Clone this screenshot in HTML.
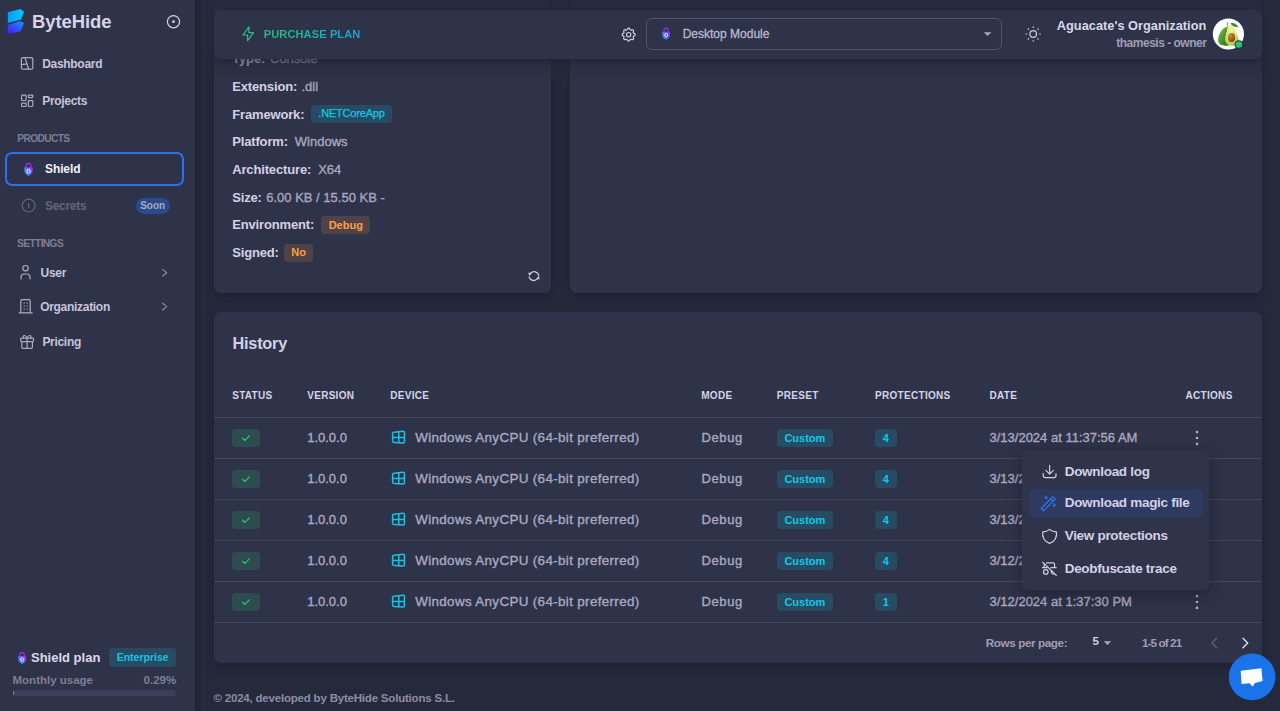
<!DOCTYPE html>
<html><head><meta charset="utf-8"><title>ByteHide Shield</title>
<style>
html,body{margin:0;padding:0;}
body{width:1280px;height:711px;overflow:hidden;position:relative;background:#25293c;font-family:"Liberation Sans",sans-serif;}
.t{position:absolute;white-space:nowrap;}
.r{position:absolute;}
</style></head><body>
<div class="r" style="left:0px;top:0px;width:195.00px;height:711.00px;background:#2f3349;"></div>
<svg class="r" style="left:0;top:0" width="40" height="40" viewBox="0 0 40 40">
<defs><linearGradient id="lg1" x1="0" y1="0" x2="1" y2="0"><stop offset="0" stop-color="#0a9cf6"/><stop offset="1" stop-color="#00c6ff"/></linearGradient>
<linearGradient id="lg2" x1="0" y1="1" x2="1" y2="0"><stop offset="0" stop-color="#4a14ff"/><stop offset="1" stop-color="#1496ff"/></linearGradient></defs>
<polygon points="7.8,12.3 20.6,9.1 24,11.8 21.1,19.6 7.8,22.9" fill="url(#lg1)"/>
<polygon points="7.8,24.9 19.7,21.1 24,22.9 20.6,31.2 8,34.1" fill="url(#lg2)"/>
</svg>
<div class="t" style="left:32px;top:13.34px;font-size:18.5px;line-height:18.5px;font-weight:700;color:#d6d4e8;letter-spacing:-0.1px;">ByteHide</div>
<svg class="r" style="left:160px;top:8px" width="28" height="28" viewBox="0 0 28 28"><circle cx="13.5" cy="13.7" r="6.1" fill="none" stroke="#cfcde4" stroke-width="1.3"/><circle cx="13.5" cy="13.7" r="1.4" fill="#cfcde4"/></svg>
<svg class="r" style="left:0;top:0" width="195" height="360" viewBox="0 0 195 360">
<g fill="none" stroke="#acaac2" stroke-width="1.2" stroke-linecap="round" stroke-linejoin="round">
<rect x="21.4" y="57.6" width="11.4" height="11.6" rx="1.5"/>
<path d="M24.9 57.6 L28.7 69.2 M21.4 64.6 L26.9 63.9"/>
<rect x="21.6" y="95.2" width="4.5" height="5.3" rx="0.8"/>
<rect x="28.3" y="95.2" width="4.5" height="2.4" rx="0.8"/>
<rect x="21.6" y="103.2" width="4.5" height="3.3" rx="0.8"/>
<rect x="28.3" y="100.7" width="4.5" height="5.8" rx="0.8"/>
</g>
<g fill="none" stroke="#acaac2" stroke-width="1.2" stroke-linecap="round" stroke-linejoin="round">
<circle cx="25.5" cy="268.2" r="2.7"/>
<path d="M21 279 V277.2 A3.2 3.2 0 0 1 24.2 274 H26.8 A3.2 3.2 0 0 1 30 277.2 V279"/>

<path d="M19.2 312.8 H32.2 M20.8 312.8 V300.8 A1.2 1.2 0 0 1 22 299.6 H29 A1.2 1.2 0 0 1 30.2 300.8 V312.8"/>
<path d="M24 303 h.5 M27 303 h.5 M24 306 h.5 M27 306 h.5 M24 309 h.5 M27 309 h.5" stroke-width="1.1"/>
<rect x="20.7" y="338.2" width="12.8" height="3.4" rx="0.8"/>
<path d="M21.8 341.6 V347.2 A1.2 1.2 0 0 0 23 348.4 H31.2 A1.2 1.2 0 0 0 32.4 347.2 V341.6 M27.1 338.2 V348.4"/>
<path d="M27.1 338.2 C25.5 334.2 22 335 23.6 338.2 M27.1 338.2 C28.7 334.2 32.2 335 30.6 338.2"/>
</g>
<g fill="none" stroke="#8e8ca4" stroke-width="1.1" stroke-linecap="round" stroke-linejoin="round"><path d="M162.6 269.4 L166.8 272.7 L162.6 276"/><path d="M162.6 303.2 L166.8 306.6 L162.6 310"/></g>
<g fill="none" stroke="#62647c" stroke-width="1.2">
<circle cx="28.6" cy="205.6" r="6.4"/>
<path d="M28.6 203.9 V207.3" stroke-linecap="round"/>
</g>
</svg>
<div class="t" style="left:42.2px;top:58.24px;font-size:12px;line-height:12px;font-weight:700;color:#c6c4da;letter-spacing:-0.3px;">Dashboard</div>
<div class="t" style="left:42.2px;top:95.34px;font-size:12px;line-height:12px;font-weight:700;color:#c6c4da;letter-spacing:-0.3px;">Projects</div>
<div class="t" style="left:17.2px;top:134.17px;font-size:10.2px;line-height:10.2px;font-weight:700;color:#7f7d96;letter-spacing:-0.6px;">PRODUCTS</div>
<div class="r" style="left:5px;top:152px;width:179.00px;height:33.50px;box-sizing:border-box;border:2px solid #2d6ff0;border-radius:7px;"></div>
<svg class="r" style="left:24.2px;top:161.7px" width="9" height="14" viewBox="0 0 9 14">
<defs><linearGradient id="lk1" x1="0" y1="0.85" x2="1" y2="0.15"><stop offset="0" stop-color="#149eff"/><stop offset="0.45" stop-color="#4f74ff"/><stop offset="1" stop-color="#b61cff"/></linearGradient></defs>
<path d="M2.2 5.2 V3.6 A2.3 2.3 0 0 1 6.8 3.6 V5.2" fill="none" stroke="#9a2ff0" stroke-width="1.3"/>
<path d="M0.3 5.2 H8.7 V8.8 C8.7 11.2 6.8 12.9 4.5 13.9 C2.2 12.9 0.3 11.2 0.3 8.8 Z" fill="url(#lk1)"/>
<path d="M4.1 6.8 L2.8 9 L4.1 11.2 M5 6.8 L6.3 9 L5 11.2" fill="none" stroke="#e8e6ff" stroke-width="1.1"/>
</svg>
<div class="t" style="left:45px;top:163.24px;font-size:12px;line-height:12px;font-weight:700;color:#f2f1fa;letter-spacing:-0.1px;">Shield</div>
<div class="t" style="left:45px;top:200.44px;font-size:12px;line-height:12px;font-weight:700;color:#64667e;letter-spacing:-0.3px;">Secrets</div>
<div class="r" style="left:135.6px;top:198px;width:34.30px;height:15.80px;background:#2a4a8c;border-radius:8px;"></div>
<div class="t" style="left:152.7px;top:201.34px;font-size:10px;line-height:10px;font-weight:700;color:#a3a9c6;letter-spacing:0px;transform:translateX(-50%);">Soon</div>
<div class="t" style="left:17px;top:239.27px;font-size:10.2px;line-height:10.2px;font-weight:700;color:#7f7d96;letter-spacing:-0.6px;">SETTINGS</div>
<div class="t" style="left:40.6px;top:267.04px;font-size:12px;line-height:12px;font-weight:700;color:#c6c4da;letter-spacing:-0.3px;">User</div>
<div class="t" style="left:40.2px;top:300.84px;font-size:12px;line-height:12px;font-weight:700;color:#c6c4da;letter-spacing:-0.3px;">Organization</div>
<div class="t" style="left:42.4px;top:336.34px;font-size:12px;line-height:12px;font-weight:700;color:#c6c4da;letter-spacing:-0.3px;">Pricing</div>
<svg class="r" style="left:17.7px;top:650.5px" width="8.3" height="13.3" viewBox="0 0 9 14">
<defs><linearGradient id="lk2" x1="0" y1="0.85" x2="1" y2="0.15"><stop offset="0" stop-color="#149eff"/><stop offset="0.45" stop-color="#4f74ff"/><stop offset="1" stop-color="#b61cff"/></linearGradient></defs>
<path d="M2.2 5.2 V3.6 A2.3 2.3 0 0 1 6.8 3.6 V5.2" fill="none" stroke="#9a2ff0" stroke-width="1.3"/>
<path d="M0.3 5.2 H8.7 V8.8 C8.7 11.2 6.8 12.9 4.5 13.9 C2.2 12.9 0.3 11.2 0.3 8.8 Z" fill="url(#lk2)"/>
<path d="M4.1 6.8 L2.8 9 L4.1 11.2 M5 6.8 L6.3 9 L5 11.2" fill="none" stroke="#e8e6ff" stroke-width="1.1"/>
</svg>
<div class="t" style="left:31px;top:651.10px;font-size:13px;line-height:13px;font-weight:700;color:#dcdaee;letter-spacing:0px;">Shield plan</div>
<div class="r" style="left:109.1px;top:648.4px;width:67.10px;height:18.35px;background:#264b62;border-radius:4px;"></div>
<div class="t" style="left:142.6px;top:652.11px;font-size:10.5px;line-height:10.5px;font-weight:700;color:#17c4e0;letter-spacing:0px;transform:translateX(-50%);">Enterprise</div>
<div class="t" style="left:12.5px;top:674.77px;font-size:11.5px;line-height:11.5px;font-weight:700;color:#7f7d96;letter-spacing:0px;">Monthly usage</div>
<div class="t" style="right:1103.8px;top:674.77px;font-size:11.5px;line-height:11.5px;font-weight:700;color:#7f7d96;letter-spacing:0px;">0.29%</div>
<div class="r" style="left:12.5px;top:689.6px;width:163.70px;height:6.40px;background:#3d405d;border-radius:3px;overflow:hidden;"><div style="width:1.2px;height:100%;background:#28c76f"></div></div>
<div class="r" style="left:214px;top:-20px;width:337.40px;height:312.90px;background:#2f3349;border-radius:7px;box-shadow:0 3px 10px 1px rgba(15,20,34,0.32);"></div>
<div class="r" style="left:569.7px;top:-20px;width:692.30px;height:312.90px;background:#2f3349;border-radius:7px;box-shadow:0 3px 10px 1px rgba(15,20,34,0.32);"></div>
<div class="t" style="left:232.2px;top:51.80px;font-size:13px;line-height:13px;font-weight:700;color:#d3d1e6;letter-spacing:-0.15px;">Type:</div>
<div class="t" style="left:232.2px;top:79.60px;font-size:13px;line-height:13px;font-weight:700;color:#d3d1e6;letter-spacing:-0.15px;">Extension:</div>
<div class="t" style="left:232.2px;top:107.60px;font-size:13px;line-height:13px;font-weight:700;color:#d3d1e6;letter-spacing:-0.15px;">Framework:</div>
<div class="t" style="left:232.2px;top:135.30px;font-size:13px;line-height:13px;font-weight:700;color:#d3d1e6;letter-spacing:-0.15px;">Platform:</div>
<div class="t" style="left:232.2px;top:162.80px;font-size:13px;line-height:13px;font-weight:700;color:#d3d1e6;letter-spacing:-0.15px;">Architecture:</div>
<div class="t" style="left:232.2px;top:190.50px;font-size:13px;line-height:13px;font-weight:700;color:#d3d1e6;letter-spacing:-0.15px;">Size:</div>
<div class="t" style="left:232.2px;top:218.30px;font-size:13px;line-height:13px;font-weight:700;color:#d3d1e6;letter-spacing:-0.15px;">Environment:</div>
<div class="t" style="left:232.2px;top:246.00px;font-size:13px;line-height:13px;font-weight:700;color:#d3d1e6;letter-spacing:-0.15px;">Signed:</div>
<div class="t" style="left:270px;top:51.80px;font-size:13px;line-height:13px;font-weight:400;color:#a9a7bf;letter-spacing:0px;-webkit-text-stroke:0.35px currentColor;">Console</div>
<div class="t" style="left:301.5px;top:79.60px;font-size:13px;line-height:13px;font-weight:400;color:#a9a7bf;letter-spacing:0px;-webkit-text-stroke:0.35px currentColor;">.dll</div>
<div class="t" style="left:294.8px;top:135.30px;font-size:13px;line-height:13px;font-weight:400;color:#a9a7bf;letter-spacing:0px;-webkit-text-stroke:0.35px currentColor;">Windows</div>
<div class="t" style="left:318.2px;top:162.80px;font-size:13px;line-height:13px;font-weight:400;color:#a9a7bf;letter-spacing:0px;-webkit-text-stroke:0.35px currentColor;">X64</div>
<div class="t" style="left:266.25px;top:190.50px;font-size:13px;line-height:13px;font-weight:400;color:#a9a7bf;letter-spacing:0px;-webkit-text-stroke:0.35px currentColor;">6.00 KB / 15.50 KB -</div>
<div class="r" style="left:311px;top:104.6px;width:81.00px;height:18.20px;background:#264b62;border-radius:4px;"></div>
<div class="t" style="left:351.5px;top:107.89px;font-size:11px;line-height:11px;font-weight:400;color:#10c8e6;letter-spacing:-0.2px;transform:translateX(-50%);-webkit-text-stroke:0.25px currentColor;">.NETCoreApp</div>
<div class="r" style="left:321.25px;top:216px;width:49.05px;height:18.00px;background:#4f4348;border-radius:4px;"></div>
<div class="t" style="left:345.8px;top:219.69px;font-size:11px;line-height:11px;font-weight:700;color:#ff9f43;letter-spacing:0px;transform:translateX(-50%);">Debug</div>
<div class="r" style="left:284.4px;top:243.75px;width:28.60px;height:17.85px;background:#4f4348;border-radius:4px;"></div>
<div class="t" style="left:298.7px;top:247.39px;font-size:11px;line-height:11px;font-weight:700;color:#ff9f43;letter-spacing:0px;transform:translateX(-50%);">No</div>
<svg class="r" style="left:526px;top:268px" width="16" height="16" viewBox="0 0 16 16"><g fill="none" stroke="#cfcde4" stroke-width="1.3" stroke-linecap="round" stroke-linejoin="round">
<path d="M4.6 5.2 A4.9 4.9 0 0 1 12.9 7.6"/><path d="M3.1 9 A4.9 4.9 0 0 0 11.4 10.9"/></g><g fill="#cfcde4"><path d="M2.2 4.5 L5.7 5.4 L3.3 7.9 Z"/><path d="M13.8 11.5 L10.3 10.6 L12.7 8.1 Z"/></g></svg>
<div class="r" style="left:195px;top:0px;width:1085.00px;height:86.00px;background:linear-gradient(180deg, rgba(37,41,60,0.82) 0%, rgba(37,41,60,0.92) 44%, rgba(37,41,60,0.45) 73%, rgba(37,41,60,0));"></div>
<div class="r" style="left:214px;top:9.5px;width:1047.50px;height:49.20px;background:#2f3349;border-radius:7px;box-shadow:0 4px 8px -4px rgba(19,17,32,0.42);"></div>
<svg class="r" style="left:238px;top:22px" width="22" height="24" viewBox="0 0 22 24"><path d="M10.9 4.9 V10.6 H15.6 L9.6 18.7 V13 H4.9 Z" fill="none" stroke="#25c283" stroke-width="1.2" stroke-linejoin="round"/></svg>
<div class="t" style="left:263.75px;top:28.54px;font-size:11px;line-height:11px;font-weight:700;color:#28c76f;letter-spacing:0.15px;background:linear-gradient(90deg,#22bd82 0%,#17b3ae 55%,#1ba2da 100%);-webkit-background-clip:text;background-clip:text;-webkit-text-fill-color:transparent;">PURCHASE PLAN</div>
<svg class="r" style="left:619.8px;top:25.6px" width="17.3" height="17.3" viewBox="0 0 24 24"><g fill="none" stroke="#cfcde4" stroke-width="1.65" stroke-linecap="round" stroke-linejoin="round">
<path d="M10.325 4.317c.426 -1.756 2.924 -1.756 3.35 0a1.724 1.724 0 0 0 2.573 1.066c1.543 -.94 3.31 .826 2.37 2.37a1.724 1.724 0 0 0 1.065 2.572c1.756 .426 1.756 2.924 0 3.35a1.724 1.724 0 0 0 -1.066 2.573c.94 1.543 -.826 3.31 -2.37 2.37a1.724 1.724 0 0 0 -2.572 1.065c-.426 1.756 -2.924 1.756 -3.35 0a1.724 1.724 0 0 0 -2.573 -1.066c-1.543 .94 -3.31 -.826 -2.37 -2.37a1.724 1.724 0 0 0 -1.065 -2.572c-1.756 -.426 -1.756 -2.924 0 -3.35a1.724 1.724 0 0 0 1.066 -2.573c-.94 -1.543 .826 -3.31 2.37 -2.37c1 .608 2.296 .07 2.572 -1.065z"/>
<circle cx="12" cy="12" r="3"/></g></svg>
<div class="r" style="left:646px;top:18px;width:356.00px;height:32.00px;box-sizing:border-box;border:1px solid rgba(225,222,245,0.2);border-radius:6px;"></div>
<svg class="r" style="left:662.3px;top:27.4px" width="8.2" height="12.6" viewBox="0 0 9 14">
<defs><linearGradient id="lk3" x1="0" y1="0.85" x2="1" y2="0.15"><stop offset="0" stop-color="#149eff"/><stop offset="0.45" stop-color="#4f74ff"/><stop offset="1" stop-color="#b61cff"/></linearGradient></defs>
<path d="M2.2 5.2 V3.6 A2.3 2.3 0 0 1 6.8 3.6 V5.2" fill="none" stroke="#9a2ff0" stroke-width="1.3"/>
<path d="M0.3 5.2 H8.7 V8.8 C8.7 11.2 6.8 12.9 4.5 13.9 C2.2 12.9 0.3 11.2 0.3 8.8 Z" fill="url(#lk3)"/>
<path d="M4.1 6.8 L2.8 9 L4.1 11.2 M5 6.8 L6.3 9 L5 11.2" fill="none" stroke="#e8e6ff" stroke-width="1.1"/>
</svg>
<div class="t" style="left:682.7px;top:27.84px;font-size:12px;line-height:12px;font-weight:400;color:#b9b7ce;letter-spacing:0px;-webkit-text-stroke:0.3px currentColor;">Desktop Module</div>
<svg class="r" style="left:980px;top:28px" width="16" height="12" viewBox="0 0 16 12"><path d="M3.7 4.3 H11.5 L7.6 8 Z" fill="#a9a7bf"/></svg>
<svg class="r" style="left:1022px;top:23px" width="22" height="22" viewBox="0 0 22 22"><g fill="none" stroke="#cfcde4" stroke-width="1.2" stroke-linecap="round">
<circle cx="11.2" cy="11" r="3.3"/>
<path d="M11.2 3.9 v.6 M11.2 17.5 v.6 M4.1 11 h.6 M17.7 11 h.6 M6.2 6 l.4 .4 M15.8 15.6 l.4 .4 M6.2 16 l.4 -.4 M15.8 6.4 l.4 -.4"/></g></svg>
<div class="t" style="right:73.70000000000005px;top:19.76px;font-size:12.8px;line-height:12.8px;font-weight:700;color:#dad8ec;letter-spacing:0px;">Aguacate's Organization</div>
<div class="t" style="right:73.70000000000005px;top:36.84px;font-size:12px;line-height:12px;font-weight:700;color:#9f9db6;letter-spacing:-0.5px;">thamesis - owner</div>
<svg class="r" style="left:1210px;top:16px" width="38" height="38" viewBox="0 0 38 38">
<defs><linearGradient id="avb" x1="0" y1="0" x2="1" y2="1"><stop offset="0" stop-color="#7fc25a"/><stop offset="1" stop-color="#1f6a12"/></linearGradient>
<radialGradient id="avf" cx="0.45" cy="0.25" r="0.8"><stop offset="0" stop-color="#f5f78c"/><stop offset="0.6" stop-color="#d3e065"/><stop offset="1" stop-color="#9cc23c"/></radialGradient>
<radialGradient id="avp" cx="0.35" cy="0.3" r="0.75"><stop offset="0" stop-color="#d08a4a"/><stop offset="1" stop-color="#7a4216"/></radialGradient></defs>
<circle cx="18.4" cy="18" r="15.6" fill="#ffffff"/>
<path d="M17.4 6.4 L17.6 9.6" stroke="#6aa84a" stroke-width="1.2"/>
<path d="M20.3 7.6 C23 6.3 26.5 7.6 28.4 11.4 C25.3 11.4 22.3 10.2 20.3 7.6 Z" fill="#3f8a2a"/>
<path d="M18 10.6 C14.2 11 10.8 14.8 9 19.2 C7.6 22.8 7.7 26.6 10.3 28.6 C12.4 30 15.6 29.9 19.2 29.4 C16.5 28 15.4 26 15.4 23.5 C15.4 20 16.5 17.5 17.2 14.5 Z" fill="url(#avb)"/>
<path d="M19.8 9 C22.8 9 24.4 12.8 25.9 16.3 C27.9 19.8 28.8 22 28.6 24.5 C28.3 28 25.5 29.8 22 29.7 C18 29.6 15.4 27.5 15.4 23.5 C15.4 20 16.5 17.5 17.2 14.5 C17.8 11.5 18.4 9 19.8 9 Z" fill="url(#avf)"/>
<ellipse cx="21.6" cy="21.4" rx="3.5" ry="4.5" fill="url(#avp)"/>
<circle cx="28.9" cy="28.6" r="4.4" fill="#2f3349"/><circle cx="28.9" cy="28.6" r="3.2" fill="#28c76f"/>
</svg>
<div class="r" style="left:213.5px;top:312px;width:1048.50px;height:350.60px;background:#2f3349;border-radius:7px;box-shadow:0 3px 10px 1px rgba(15,20,34,0.32);"></div>
<div class="t" style="left:232.4px;top:335.00px;font-size:16.3px;line-height:16.3px;font-weight:700;color:#d3d1e4;letter-spacing:-0.2px;">History</div>
<div class="t" style="left:232.2px;top:390.84px;font-size:10px;line-height:10px;font-weight:700;color:#d6d4e8;letter-spacing:0.3px;">STATUS</div>
<div class="t" style="left:307.2px;top:390.84px;font-size:10px;line-height:10px;font-weight:700;color:#d6d4e8;letter-spacing:0.3px;">VERSION</div>
<div class="t" style="left:390.3px;top:390.84px;font-size:10px;line-height:10px;font-weight:700;color:#d6d4e8;letter-spacing:0.3px;">DEVICE</div>
<div class="t" style="left:701.2px;top:390.84px;font-size:10px;line-height:10px;font-weight:700;color:#d6d4e8;letter-spacing:0.3px;">MODE</div>
<div class="t" style="left:776.8px;top:390.84px;font-size:10px;line-height:10px;font-weight:700;color:#d6d4e8;letter-spacing:0.3px;">PRESET</div>
<div class="t" style="left:875px;top:390.84px;font-size:10px;line-height:10px;font-weight:700;color:#d6d4e8;letter-spacing:0.3px;">PROTECTIONS</div>
<div class="t" style="left:989.5px;top:390.84px;font-size:10px;line-height:10px;font-weight:700;color:#d6d4e8;letter-spacing:0.3px;">DATE</div>
<div class="t" style="right:47.40000000000009px;top:390.84px;font-size:10px;line-height:10px;font-weight:700;color:#d6d4e8;letter-spacing:0.3px;">ACTIONS</div>
<div class="r" style="left:213.5px;top:416.5px;width:1048.50px;height:1.00px;background:rgba(225,222,245,0.12);"></div>
<div class="r" style="left:213.5px;top:458px;width:1048.50px;height:1.00px;background:rgba(225,222,245,0.12);"></div>
<div class="r" style="left:232.2px;top:428.70000000000005px;width:27.80px;height:18.30px;background:#2e4b4f;border-radius:4px;"></div>
<svg class="r" style="left:239px;top:430.85px" width="14" height="14" viewBox="0 0 14 14"><path d="M3.6 7.3 L5.9 9.4 L10.3 4.9" fill="none" stroke="#28c76f" stroke-width="1.3" stroke-linecap="round" stroke-linejoin="round"/></svg>
<div class="t" style="left:307.2px;top:431.20px;font-size:13px;line-height:13px;font-weight:400;color:#aba9c1;letter-spacing:0px;-webkit-text-stroke:0.35px currentColor;">1.0.0.0</div>
<svg class="r" style="left:388px;top:427.85px" width="20" height="20" viewBox="0 0 20 20"><g fill="none" stroke="#1fc0e0" stroke-width="1.5" stroke-linejoin="round">
<path d="M4.6 5.7 Q4.6 4.4 5.9 4.3 L15.1 3.3 Q16.4 3.2 16.4 4.5 V13.8 Q16.4 15.1 15.1 15 L5.9 14.4 Q4.6 14.3 4.6 13 Z"/><path d="M4.6 9.6 H16.4 M10.8 3.8 V14.7"/></g></svg>
<div class="t" style="left:415.2px;top:430.86px;font-size:13.4px;line-height:13.4px;font-weight:400;color:#aba9c1;letter-spacing:0.35px;-webkit-text-stroke:0.35px currentColor;">Windows AnyCPU (64-bit preferred)</div>
<div class="t" style="left:701.5px;top:431.20px;font-size:13px;line-height:13px;font-weight:400;color:#aba9c1;letter-spacing:0.6px;-webkit-text-stroke:0.35px currentColor;">Debug</div>
<div class="r" style="left:777.1px;top:428.65000000000003px;width:55.60px;height:18.40px;background:#264b62;border-radius:4px;"></div>
<div class="t" style="left:804.9px;top:432.54px;font-size:11px;line-height:11px;font-weight:700;color:#10c8e6;letter-spacing:0px;transform:translateX(-50%);">Custom</div>
<div class="r" style="left:875px;top:428.65000000000003px;width:21.80px;height:18.40px;background:#264b62;border-radius:4px;"></div>
<div class="t" style="left:885.9px;top:432.54px;font-size:11px;line-height:11px;font-weight:700;color:#10c8e6;letter-spacing:0px;transform:translateX(-50%);">4</div>
<div class="t" style="left:989.5px;top:431.20px;font-size:13px;line-height:13px;font-weight:400;color:#aba9c1;letter-spacing:0px;-webkit-text-stroke:0.35px currentColor;">3/13/2024 at 11:37:56 AM</div>
<svg class="r" style="left:1190px;top:429.85px" width="14" height="16" viewBox="0 0 14 16"><g fill="#b0aec6"><circle cx="7" cy="2.1" r="1.3"/><circle cx="7" cy="8" r="1.3"/><circle cx="7" cy="13.9" r="1.3"/></g></svg>
<div class="r" style="left:213.5px;top:499px;width:1048.50px;height:1.00px;background:rgba(225,222,245,0.12);"></div>
<div class="r" style="left:232.2px;top:469.70000000000005px;width:27.80px;height:18.30px;background:#2e4b4f;border-radius:4px;"></div>
<svg class="r" style="left:239px;top:471.85px" width="14" height="14" viewBox="0 0 14 14"><path d="M3.6 7.3 L5.9 9.4 L10.3 4.9" fill="none" stroke="#28c76f" stroke-width="1.3" stroke-linecap="round" stroke-linejoin="round"/></svg>
<div class="t" style="left:307.2px;top:472.20px;font-size:13px;line-height:13px;font-weight:400;color:#aba9c1;letter-spacing:0px;-webkit-text-stroke:0.35px currentColor;">1.0.0.0</div>
<svg class="r" style="left:388px;top:468.85px" width="20" height="20" viewBox="0 0 20 20"><g fill="none" stroke="#1fc0e0" stroke-width="1.5" stroke-linejoin="round">
<path d="M4.6 5.7 Q4.6 4.4 5.9 4.3 L15.1 3.3 Q16.4 3.2 16.4 4.5 V13.8 Q16.4 15.1 15.1 15 L5.9 14.4 Q4.6 14.3 4.6 13 Z"/><path d="M4.6 9.6 H16.4 M10.8 3.8 V14.7"/></g></svg>
<div class="t" style="left:415.2px;top:471.86px;font-size:13.4px;line-height:13.4px;font-weight:400;color:#aba9c1;letter-spacing:0.35px;-webkit-text-stroke:0.35px currentColor;">Windows AnyCPU (64-bit preferred)</div>
<div class="t" style="left:701.5px;top:472.20px;font-size:13px;line-height:13px;font-weight:400;color:#aba9c1;letter-spacing:0.6px;-webkit-text-stroke:0.35px currentColor;">Debug</div>
<div class="r" style="left:777.1px;top:469.65000000000003px;width:55.60px;height:18.40px;background:#264b62;border-radius:4px;"></div>
<div class="t" style="left:804.9px;top:473.54px;font-size:11px;line-height:11px;font-weight:700;color:#10c8e6;letter-spacing:0px;transform:translateX(-50%);">Custom</div>
<div class="r" style="left:875px;top:469.65000000000003px;width:21.80px;height:18.40px;background:#264b62;border-radius:4px;"></div>
<div class="t" style="left:885.9px;top:473.54px;font-size:11px;line-height:11px;font-weight:700;color:#10c8e6;letter-spacing:0px;transform:translateX(-50%);">4</div>
<div class="t" style="left:989.5px;top:472.20px;font-size:13px;line-height:13px;font-weight:400;color:#aba9c1;letter-spacing:0px;-webkit-text-stroke:0.35px currentColor;">3/13/2024 at 11:37:56 AM</div>
<svg class="r" style="left:1190px;top:470.85px" width="14" height="16" viewBox="0 0 14 16"><g fill="#b0aec6"><circle cx="7" cy="2.1" r="1.3"/><circle cx="7" cy="8" r="1.3"/><circle cx="7" cy="13.9" r="1.3"/></g></svg>
<div class="r" style="left:213.5px;top:540px;width:1048.50px;height:1.00px;background:rgba(225,222,245,0.12);"></div>
<div class="r" style="left:232.2px;top:510.70000000000005px;width:27.80px;height:18.30px;background:#2e4b4f;border-radius:4px;"></div>
<svg class="r" style="left:239px;top:512.85px" width="14" height="14" viewBox="0 0 14 14"><path d="M3.6 7.3 L5.9 9.4 L10.3 4.9" fill="none" stroke="#28c76f" stroke-width="1.3" stroke-linecap="round" stroke-linejoin="round"/></svg>
<div class="t" style="left:307.2px;top:513.20px;font-size:13px;line-height:13px;font-weight:400;color:#aba9c1;letter-spacing:0px;-webkit-text-stroke:0.35px currentColor;">1.0.0.0</div>
<svg class="r" style="left:388px;top:509.85px" width="20" height="20" viewBox="0 0 20 20"><g fill="none" stroke="#1fc0e0" stroke-width="1.5" stroke-linejoin="round">
<path d="M4.6 5.7 Q4.6 4.4 5.9 4.3 L15.1 3.3 Q16.4 3.2 16.4 4.5 V13.8 Q16.4 15.1 15.1 15 L5.9 14.4 Q4.6 14.3 4.6 13 Z"/><path d="M4.6 9.6 H16.4 M10.8 3.8 V14.7"/></g></svg>
<div class="t" style="left:415.2px;top:512.86px;font-size:13.4px;line-height:13.4px;font-weight:400;color:#aba9c1;letter-spacing:0.35px;-webkit-text-stroke:0.35px currentColor;">Windows AnyCPU (64-bit preferred)</div>
<div class="t" style="left:701.5px;top:513.20px;font-size:13px;line-height:13px;font-weight:400;color:#aba9c1;letter-spacing:0.6px;-webkit-text-stroke:0.35px currentColor;">Debug</div>
<div class="r" style="left:777.1px;top:510.65000000000003px;width:55.60px;height:18.40px;background:#264b62;border-radius:4px;"></div>
<div class="t" style="left:804.9px;top:514.54px;font-size:11px;line-height:11px;font-weight:700;color:#10c8e6;letter-spacing:0px;transform:translateX(-50%);">Custom</div>
<div class="r" style="left:875px;top:510.65000000000003px;width:21.80px;height:18.40px;background:#264b62;border-radius:4px;"></div>
<div class="t" style="left:885.9px;top:514.54px;font-size:11px;line-height:11px;font-weight:700;color:#10c8e6;letter-spacing:0px;transform:translateX(-50%);">4</div>
<div class="t" style="left:989.5px;top:513.20px;font-size:13px;line-height:13px;font-weight:400;color:#aba9c1;letter-spacing:0px;-webkit-text-stroke:0.35px currentColor;">3/13/2024 at 11:37:56 AM</div>
<svg class="r" style="left:1190px;top:511.85px" width="14" height="16" viewBox="0 0 14 16"><g fill="#b0aec6"><circle cx="7" cy="2.1" r="1.3"/><circle cx="7" cy="8" r="1.3"/><circle cx="7" cy="13.9" r="1.3"/></g></svg>
<div class="r" style="left:213.5px;top:581px;width:1048.50px;height:1.00px;background:rgba(225,222,245,0.12);"></div>
<div class="r" style="left:232.2px;top:551.7px;width:27.80px;height:18.30px;background:#2e4b4f;border-radius:4px;"></div>
<svg class="r" style="left:239px;top:553.85px" width="14" height="14" viewBox="0 0 14 14"><path d="M3.6 7.3 L5.9 9.4 L10.3 4.9" fill="none" stroke="#28c76f" stroke-width="1.3" stroke-linecap="round" stroke-linejoin="round"/></svg>
<div class="t" style="left:307.2px;top:554.20px;font-size:13px;line-height:13px;font-weight:400;color:#aba9c1;letter-spacing:0px;-webkit-text-stroke:0.35px currentColor;">1.0.0.0</div>
<svg class="r" style="left:388px;top:550.85px" width="20" height="20" viewBox="0 0 20 20"><g fill="none" stroke="#1fc0e0" stroke-width="1.5" stroke-linejoin="round">
<path d="M4.6 5.7 Q4.6 4.4 5.9 4.3 L15.1 3.3 Q16.4 3.2 16.4 4.5 V13.8 Q16.4 15.1 15.1 15 L5.9 14.4 Q4.6 14.3 4.6 13 Z"/><path d="M4.6 9.6 H16.4 M10.8 3.8 V14.7"/></g></svg>
<div class="t" style="left:415.2px;top:553.86px;font-size:13.4px;line-height:13.4px;font-weight:400;color:#aba9c1;letter-spacing:0.35px;-webkit-text-stroke:0.35px currentColor;">Windows AnyCPU (64-bit preferred)</div>
<div class="t" style="left:701.5px;top:554.20px;font-size:13px;line-height:13px;font-weight:400;color:#aba9c1;letter-spacing:0.6px;-webkit-text-stroke:0.35px currentColor;">Debug</div>
<div class="r" style="left:777.1px;top:551.65px;width:55.60px;height:18.40px;background:#264b62;border-radius:4px;"></div>
<div class="t" style="left:804.9px;top:555.54px;font-size:11px;line-height:11px;font-weight:700;color:#10c8e6;letter-spacing:0px;transform:translateX(-50%);">Custom</div>
<div class="r" style="left:875px;top:551.65px;width:21.80px;height:18.40px;background:#264b62;border-radius:4px;"></div>
<div class="t" style="left:885.9px;top:555.54px;font-size:11px;line-height:11px;font-weight:700;color:#10c8e6;letter-spacing:0px;transform:translateX(-50%);">4</div>
<div class="t" style="left:989.5px;top:554.20px;font-size:13px;line-height:13px;font-weight:400;color:#aba9c1;letter-spacing:0px;-webkit-text-stroke:0.35px currentColor;">3/12/2024 at 1:37:30 PM</div>
<svg class="r" style="left:1190px;top:552.85px" width="14" height="16" viewBox="0 0 14 16"><g fill="#b0aec6"><circle cx="7" cy="2.1" r="1.3"/><circle cx="7" cy="8" r="1.3"/><circle cx="7" cy="13.9" r="1.3"/></g></svg>
<div class="r" style="left:213.5px;top:622px;width:1048.50px;height:1.00px;background:rgba(225,222,245,0.12);"></div>
<div class="r" style="left:232.2px;top:592.7px;width:27.80px;height:18.30px;background:#2e4b4f;border-radius:4px;"></div>
<svg class="r" style="left:239px;top:594.85px" width="14" height="14" viewBox="0 0 14 14"><path d="M3.6 7.3 L5.9 9.4 L10.3 4.9" fill="none" stroke="#28c76f" stroke-width="1.3" stroke-linecap="round" stroke-linejoin="round"/></svg>
<div class="t" style="left:307.2px;top:595.20px;font-size:13px;line-height:13px;font-weight:400;color:#aba9c1;letter-spacing:0px;-webkit-text-stroke:0.35px currentColor;">1.0.0.0</div>
<svg class="r" style="left:388px;top:591.85px" width="20" height="20" viewBox="0 0 20 20"><g fill="none" stroke="#1fc0e0" stroke-width="1.5" stroke-linejoin="round">
<path d="M4.6 5.7 Q4.6 4.4 5.9 4.3 L15.1 3.3 Q16.4 3.2 16.4 4.5 V13.8 Q16.4 15.1 15.1 15 L5.9 14.4 Q4.6 14.3 4.6 13 Z"/><path d="M4.6 9.6 H16.4 M10.8 3.8 V14.7"/></g></svg>
<div class="t" style="left:415.2px;top:594.86px;font-size:13.4px;line-height:13.4px;font-weight:400;color:#aba9c1;letter-spacing:0.35px;-webkit-text-stroke:0.35px currentColor;">Windows AnyCPU (64-bit preferred)</div>
<div class="t" style="left:701.5px;top:595.20px;font-size:13px;line-height:13px;font-weight:400;color:#aba9c1;letter-spacing:0.6px;-webkit-text-stroke:0.35px currentColor;">Debug</div>
<div class="r" style="left:777.1px;top:592.65px;width:55.60px;height:18.40px;background:#264b62;border-radius:4px;"></div>
<div class="t" style="left:804.9px;top:596.54px;font-size:11px;line-height:11px;font-weight:700;color:#10c8e6;letter-spacing:0px;transform:translateX(-50%);">Custom</div>
<div class="r" style="left:875px;top:592.65px;width:21.80px;height:18.40px;background:#264b62;border-radius:4px;"></div>
<div class="t" style="left:885.9px;top:596.54px;font-size:11px;line-height:11px;font-weight:700;color:#10c8e6;letter-spacing:0px;transform:translateX(-50%);">1</div>
<div class="t" style="left:989.5px;top:595.20px;font-size:13px;line-height:13px;font-weight:400;color:#aba9c1;letter-spacing:0px;-webkit-text-stroke:0.35px currentColor;">3/12/2024 at 1:37:30 PM</div>
<svg class="r" style="left:1190px;top:593.85px" width="14" height="16" viewBox="0 0 14 16"><g fill="#b0aec6"><circle cx="7" cy="2.1" r="1.3"/><circle cx="7" cy="8" r="1.3"/><circle cx="7" cy="13.9" r="1.3"/></g></svg>
<div class="t" style="left:985.75px;top:636.70px;font-size:11.7px;line-height:11.7px;font-weight:700;color:#9f9db6;letter-spacing:-0.4px;">Rows per page:</div>
<div class="t" style="left:1092.5px;top:636.27px;font-size:11.5px;line-height:11.5px;font-weight:700;color:#cfcde4;letter-spacing:0px;">5</div>
<svg class="r" style="left:1100px;top:636px" width="14" height="14" viewBox="0 0 14 14"><path d="M3.8 5.3 H11.2 L7.5 9 Z" fill="#a9a7bf"/></svg>
<div class="t" style="left:1142px;top:636.70px;font-size:11.7px;line-height:11.7px;font-weight:700;color:#9f9db6;letter-spacing:-0.9px;">1-5 of 21</div>
<svg class="r" style="left:1205px;top:634px" width="50" height="18" viewBox="0 0 50 18"><g fill="none" stroke-width="1.5" stroke-linecap="round" stroke-linejoin="round">
<path d="M11.6 4.3 L6.9 9 L11.6 13.7" stroke="#5e6078"/><path d="M38 4.3 L42.7 9 L38 13.7" stroke="#dcdaee"/></g></svg>
<div class="r" style="left:1022.4px;top:449.5px;width:186.80px;height:140.20px;background:#30344b;border-radius:6px;box-shadow:0 4px 14px 2px rgba(15,18,30,0.35);"></div>
<div class="r" style="left:1029px;top:489px;width:174.00px;height:29.30px;background:#2e3a60;border-radius:6px;"></div>
<div class="t" style="left:1064.7px;top:464.57px;font-size:13.5px;line-height:13.5px;font-weight:700;color:#d3d1e6;letter-spacing:-0.3px;">Download log</div>
<div class="t" style="left:1064.7px;top:496.37px;font-size:13.5px;line-height:13.5px;font-weight:700;color:#d3d1e6;letter-spacing:-0.3px;">Download magic file</div>
<div class="t" style="left:1064.7px;top:529.17px;font-size:13.5px;line-height:13.5px;font-weight:700;color:#d3d1e6;letter-spacing:-0.3px;">View protections</div>
<div class="t" style="left:1064.7px;top:561.77px;font-size:13.5px;line-height:13.5px;font-weight:700;color:#d3d1e6;letter-spacing:-0.3px;">Deobfuscate trace</div>
<svg class="r" style="left:1000px;top:440px" width="80" height="150" viewBox="1000 440 80 150"><g fill="none" stroke="#cfcde4" stroke-width="1.2" stroke-linecap="round" stroke-linejoin="round">
<path d="M1043.2 473.6 V475.6 A2 2 0 0 0 1045.2 477.6 H1054 A2 2 0 0 0 1056 475.6 V473.6"/>
<path d="M1049.6 465.3 V474.1 M1045.9 470.4 L1049.6 474.1 L1053.3 470.4"/>
<path d="M1049.6 529.4 A10 10 0 0 0 1056.4 531.9 A10 10 0 0 1 1049.6 543.4 A10 10 0 0 1 1042.8 531.9 A10 10 0 0 0 1049.6 529.4 Z"/>
<path d="M1046.5 562.8 H1053 A1.6 1.6 0 0 1 1054.6 564.4 V567.2 M1044.2 563.8 V567.7 M1042.5 567.7 H1047 M1051 567.7 H1056.2"/>
<circle cx="1045.8" cy="571.9" r="2.3"/><path d="M1051.6 570.6 A2.3 2.3 0 0 0 1053.6 574.1"/>
<path d="M1042.7 562.1 L1056.2 575.3"/>
</g>
<g fill="none" stroke="#2f72ef" stroke-width="1.25" stroke-linecap="round" stroke-linejoin="round">
<path d="M1043.5 510.8 L1055.2 499.1 L1052.9 496.8 L1041.2 508.5 Z M1050.6 499.1 L1052.9 501.4"/>
<path d="M1046.2 496.2 a1.5 1.5 0 0 0 1.5 1.5 a1.5 1.5 0 0 0 -1.5 1.5 a1.5 1.5 0 0 0 -1.5 -1.5 a1.5 1.5 0 0 0 1.5 -1.5" fill="#2f72ef" stroke-width="0.8"/>
<path d="M1054.3 503.8 a1.5 1.5 0 0 0 1.5 1.5 a1.5 1.5 0 0 0 -1.5 1.5 a1.5 1.5 0 0 0 -1.5 -1.5 a1.5 1.5 0 0 0 1.5 -1.5" fill="#2f72ef" stroke-width="0.8"/>
</g></svg>
<div class="t" style="left:213.5px;top:693.07px;font-size:11.5px;line-height:11.5px;font-weight:700;color:#8e8ca6;letter-spacing:-0.2px;">© 2024, developed by ByteHide Solutions S.L.</div>
<svg class="r" style="left:1226px;top:651px" width="52" height="52" viewBox="0 0 52 52"><circle cx="26.1" cy="25.9" r="23.3" fill="#1b73ea"/>
<path d="M14.7 19.7 L35.4 17.2 L36.6 29.9 L29 31.9 L26.5 35.6 L23.6 32.3 L15.5 32.9 Z" fill="#ffffff"/></svg>
<div class="r" style="left:195px;top:0px;width:8.00px;height:711.00px;background:linear-gradient(90deg, rgba(15,18,30,0.22), rgba(15,18,30,0));"></div>
</body></html>
